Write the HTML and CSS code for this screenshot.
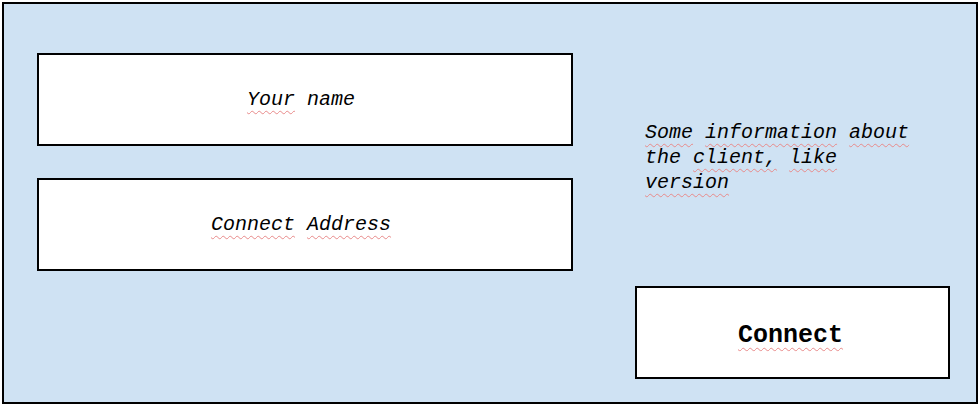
FILE: index.html
```html
<!DOCTYPE html>
<html>
<head>
<meta charset="utf-8">
<link rel="stylesheet" href="styles.css">
</head>
<body>
<div class="frame">
  <div class="left">
    <div class="field"><span class="label"><span class="sp">Your</span> name</span></div>
    <div class="field"><span class="label"><span class="sp">Connect</span> <span class="sp">Address</span></span></div>
  </div>
  <div class="right">
    <p class="info"><span class="sp">Some</span> <span class="sp">information</span> <span class="sp">about</span> the <span class="sp">client,</span> <span class="sp">like</span> <span class="sp">version</span></p>
    <div class="button"><span class="sp">Connect</span></div>
  </div>
</div>
</body>
</html>
```
FILE: styles.css
```css
html, body {
  margin: 0;
  padding: 0;
  background: #ffffff;
}
body {
  padding: 2px;
  font-family: "Liberation Mono", "Courier New", monospace;
}
.frame {
  box-sizing: border-box;
  width: 976px;
  height: 402px;
  border: 2px solid #000;
  background: #cfe2f3;
  display: flex;
  padding: 49px 0 23px 33px;
}
.left {
  display: flex;
  flex-direction: column;
  gap: 32px;
}
.field {
  box-sizing: border-box;
  width: 536px;
  height: 93px;
  border: 2px solid #000;
  background: #fff;
  display: flex;
  align-items: center;
  justify-content: center;
  font-style: italic;
  font-size: 20px;
  line-height: 25px;
  color: #000;
  padding-right: 8px;
}
.label {
  white-space: pre;
}
.right {
  margin-left: 62px;
  display: flex;
  flex-direction: column;
  width: 315px;
}
.info {
  margin: 67px 0 0 10px;
  width: 272px;
  font-style: italic;
  font-size: 20px;
  line-height: 25px;
  color: #000;
}
.button {
  margin-top: auto;
  box-sizing: border-box;
  width: 315px;
  height: 93px;
  border: 2px solid #000;
  background: #fff;
  display: flex;
  align-items: center;
  justify-content: center;
  font-weight: bold;
  font-size: 25px;
  line-height: 30px;
  padding: 6px 4px 0 0;
  color: #000;
}
.sp {
  text-decoration: underline wavy #e88a8a;
  text-decoration-thickness: 1px;
  text-underline-offset: 5px;
}
```
